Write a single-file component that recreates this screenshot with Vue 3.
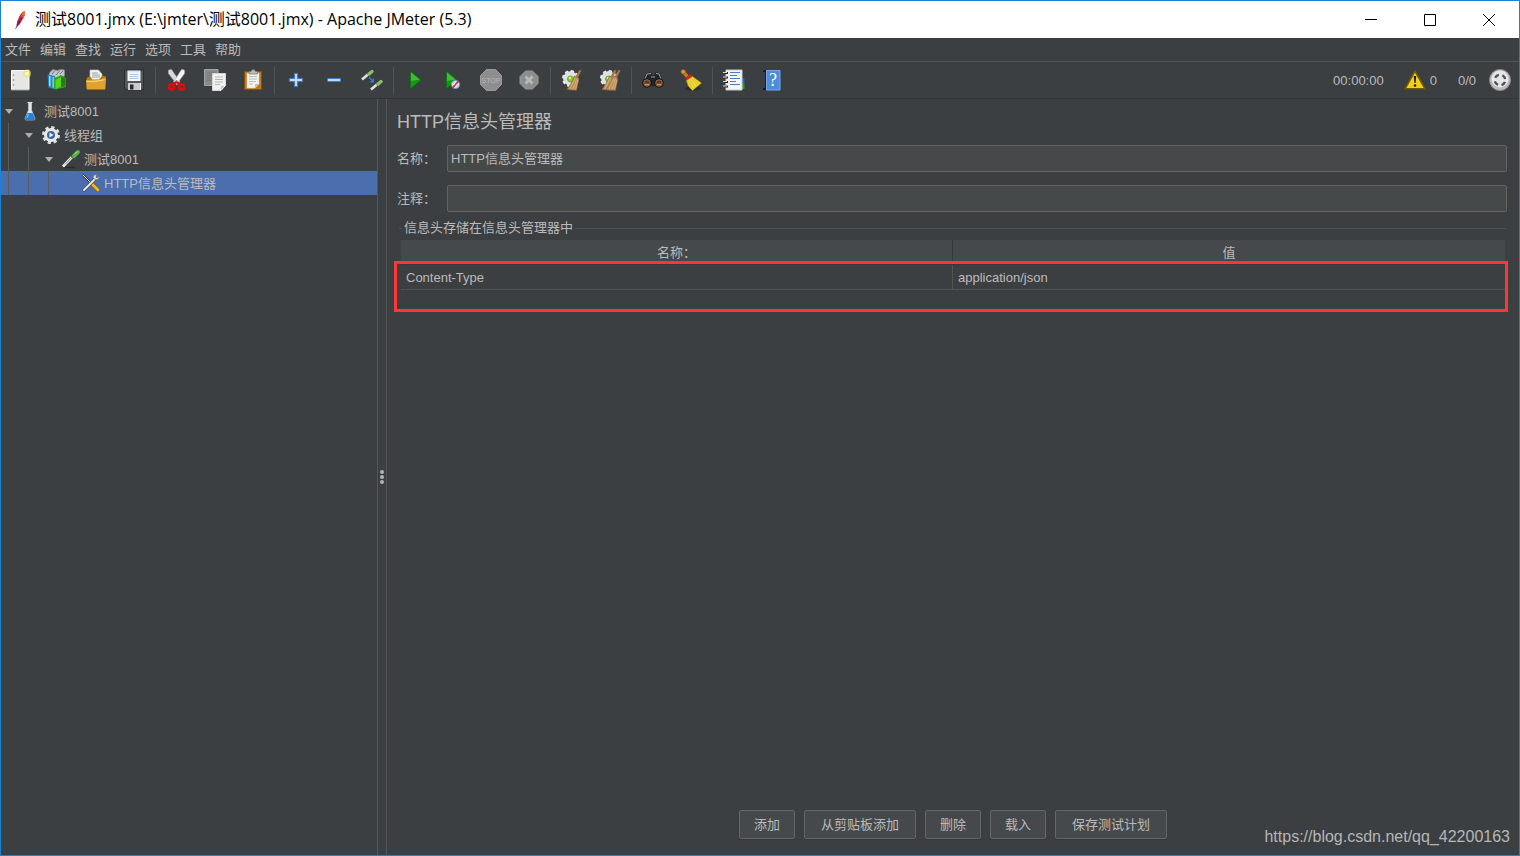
<script setup>
import { ref } from 'vue'

const menus = ['文件', '编辑', '查找', '运行', '选项', '工具', '帮助']

const broom = (x) => `<g transform="translate(${x} 0)"><path d="M18.500 1 20.500 1.500 17 8.500 14.500 7.500Z" fill="#a9754a"/><path d="M13.500 7 17.500 8.800 17.500 12 15.500 21.500 6 20.500 10 14.500Z" fill="#bb8f5b" stroke="#86623c" stroke-width=".6"/><path d="M14 9 9 20M15.500 10 12 20.500M16.800 11 14.500 20" stroke="#e0bd86" stroke-width=".7"/></g>`
const cog = '<circle cx="9.500" cy="9.500" r="7.200" fill="#d9dbdc" stroke="#ececec" stroke-width="2.600" stroke-dasharray="3.200 2.450"/><circle cx="9.500" cy="9.500" r="7" fill="#dfe1e2"/><circle cx="9.500" cy="10" r="3" fill="#7ed321" stroke="#6aa63a"/><circle cx="9" cy="9" r="1.200" fill="#d5ff9a"/>'

const tools = [
  [
    { name: '新建', art: '<path d="M2.500 1.500h17.500v19h-17.500z" fill="#e6e6e5" stroke="#fff"/><path d="M2 21h18.500" stroke="#999"/><circle cx="4.500" cy="6" r=".8" fill="#888"/><circle cx="4.500" cy="11" r=".8" fill="#888"/><circle cx="4.500" cy="16" r=".8" fill="#888"/><circle cx="18" cy="4.500" r="4" fill="#f0e45a" opacity=".6"/><circle cx="18" cy="4.500" r="1.800" fill="#fffbc0"/>' },
    { name: '模板', art: '<path d="M3 3 6 .5 10 1.500 14 .5 17.500 1v6L9 9 2 6Z" fill="#c2c6c8" stroke="#858b8f" stroke-width=".7"/><path d="M5 5 8 1.500M9 6l4-4.500M13 5l3-3" stroke="#737a7e"/><path d="M.5 5.500 8 7v13.500l-6.500-2Z" fill="#1d8ac9"/><path d="m2 7 1.500.3v10L2 17Z" fill="#9ddcff"/><path d="m5.500 8 1.500.3v10.500l-1.500-.4Z" fill="#7bcaf5"/><path d="m7 9.500 7-3.500 5 3v9L9 20.500 7 19Z" fill="#32a90d"/><path d="m8.500 11 5.500-3v9.500l-5.500 2.500Z" fill="#58d21f"/><path d="m14 8 4.500 1.500v7.500l-4.500 1Z" fill="#247e0b"/>' },
    { name: '打开', art: '<path d="M5 1h8.500L17 5v9H5Z" fill="#f4f4f4" stroke="#bbb" stroke-width=".7"/><path d="M7 4h6M7 6h8M7 8h8" stroke="#888" stroke-width=".8"/><path d="M1.500 9.500 3 8h3l1 2.500h7L17 7h3.500v13H1.500Z" fill="#b77a12"/><path d="M1 11h6.500l8-.5 5.500-2-1 12.500H2Z" fill="#dfa22e"/><path d="M2 12.500h6l8-1 3.500-1" fill="none" stroke="#ffdc89"/><path d="M2 20.500h18" stroke="#a26a0e"/>' },
    { name: '保存', art: '<path d="M1.500 1h19v20h-17l-2-2Z" fill="#55585a" stroke="#2b2d2f"/><path d="M4.500 1.500h13V12h-13Z" fill="#f5f7f9"/><path d="M5 2h12v1.500H5Z" fill="#dce5ee"/><path d="M6.500 5.500h9M6.500 7.500h9M6.500 9.500h9" stroke="#a9c6de"/><path d="M5 14h12v7H5Z" fill="#c9cbcc"/><path d="M7 15.500h3.500v5H7Z" fill="#2c2e30"/><path d="M17.500 14v7" stroke="#eee"/>' }
  ],
  [
    { name: '剪切', art: '<path d="M2.500 1 5.500.5 14 13 11 15.500 2.500 4.500Z" fill="#d9dadb" stroke="#aaa" stroke-width=".6"/><path d="M18.500 1 15.500.5 7.500 13 10.500 15.500 18.500 4.500Z" fill="#f4f4f4" stroke="#aaa" stroke-width=".6"/><circle cx="5.500" cy="18" r="2.600" fill="none" stroke="#d50f12" stroke-width="2.600"/><circle cx="15.500" cy="18" r="2.600" fill="none" stroke="#d50f12" stroke-width="2.600"/><path d="m6.500 15.500 4-2.500 4 2.500" fill="none" stroke="#d50f12" stroke-width="2.600"/><circle cx="10.500" cy="12" r="1" fill="#888"/>' },
    { name: '复制', art: '<path d="M.5.500H14v16H.5Z" fill="#888b8c" stroke="#a4a7a8"/><path d="M3 4h9M3 6.500h5M3 9h4M3 11.500h4" stroke="#757879"/><path d="M8.500 4.500h13v12L17 21.500H8.500Z" fill="#f1f1f0" stroke="#d5d5d5"/><path d="M11 8h8M11 10.500h8M11 13h8M11 15.500h5" stroke="#b5b5b5"/><path d="M16.500 21.500v-5h5Z" fill="#c8c8c8" stroke="#fff" stroke-width=".5"/>' },
    { name: '粘贴', art: '<path d="M2.500 2.500h17v18h-17Z" fill="#c27a19" stroke="#865006"/><path d="M5 4h12v11l-4 4H5Z" fill="#f3f3f2" stroke="#ccc" stroke-width=".6"/><path d="M7 7.500h8M7 10h8M7 12.500h7M7 15h4" stroke="#bbb"/><path d="M7 5V2.500h2L10 .8h2.500l1 1.700h2V5Z" fill="#b8bcba" stroke="#6f7472" stroke-width=".7"/><path d="M13 19v-4h4Z" fill="#bfbfbf"/>' }
  ],
  [
    { name: '展开', art: '<path d="M9.500 4.500h3v5h5v3h-5v5h-3v-5h-5v-3h5Z" fill="#bcd9f7" stroke="#3c7bd0"/>' },
    { name: '折叠', art: '<path d="M4.500 9.500h13v3h-13Z" fill="#bcd9f7" stroke="#3c7bd0"/>' },
    { name: '切换', art: '<path d="m1 10.500 6.500-5.500" stroke="#dfe2df" stroke-width="2.600"/><path d="m6 4 3 3.500" stroke="#4b6f3d" stroke-width="1.600"/><path d="m8 5 3-2.500" stroke="#8bbf6b" stroke-width="3.400" stroke-linecap="round"/><path d="m10 20.500 6.500-5.500" stroke="#dfe2df" stroke-width="2.600"/><path d="m15 14 3 3.500" stroke="#4b6f3d" stroke-width="1.600"/><path d="m17 15 3-2.500" stroke="#8bbf6b" stroke-width="3.400" stroke-linecap="round"/><path d="m8 8.500 3.500 3" stroke="#3477df" stroke-width="1.400"/><path d="M13 9v4.500H8.500Z" fill="#3477df"/>' }
  ],
  [
    { name: '启动', art: '<path d="M6.500 2.500 17 11 6.500 19.500Z" fill="#129b0e" stroke="#087708" stroke-width=".7"/><path d="M7 3.500 15.500 10.500 7 12Z" fill="#45b93b"/>' },
    { name: '不停顿开始', art: '<path d="M4.500 2.500 15 11 4.500 19.500Z" fill="#129b0e" stroke="#087708" stroke-width=".7"/><path d="M5 3.500 13.500 10.500 5 12Z" fill="#45b93b"/><circle cx="13.500" cy="15.500" r="4" fill="#fff" stroke="#5d9de0"/><circle cx="13.500" cy="15.500" r="2.500" fill="none" stroke="#8cb6e2" stroke-width=".8"/><path d="m10.500 19 6-7" stroke="#e32d25" stroke-width="1.700"/>' },
    { name: '停止', art: '<path d="M6.500.500h9l6 6v9l-6 6h-9l-6-6v-9Z" fill="#8e8e8e" stroke="#9c9c9c"/><text x="11" y="14" text-anchor="middle" font-family="Liberation Sans, sans-serif" font-size="7" fill="#b8b8b8">STOP</text>' },
    { name: '关闭', art: '<path d="M7.500 2h7l5.500 5.500v7L14.500 20h-7L2 14.500v-7Z" fill="#8d8d8d" stroke="#999"/><path d="m7.500 7.500 7 7m0-7-7 7" stroke="#b9b9b9" stroke-width="2.800"/>' }
  ],
  [
    { name: '清除', art: cog + broom(0) },
    { name: '清除全部', art: cog + broom(-3) + broom(1) }
  ],
  [
    { name: '查找', art: '<path d="M4 5 6 3.500h3l1.500 3h1.500l1.500-3H16L18 5l3 7-1 5H2L.5 12Z" fill="#222425"/><path d="m3 10 2-5 4-.5M19 10l-2-5-3-.5M9 8h4" fill="none" stroke="#9d9fa0"/><circle cx="5" cy="14" r="4" fill="#6c3413" stroke="#151515" stroke-width="1.500"/><circle cx="17" cy="14" r="4" fill="#6c3413" stroke="#151515" stroke-width="1.500"/><circle cx="5" cy="14" r="3.300" fill="none" stroke="#aaa" stroke-width=".6"/><circle cx="17" cy="14" r="3.300" fill="none" stroke="#aaa" stroke-width=".6"/><path d="M3 15.500h4M15 15.500h4" stroke="#d8884e" stroke-width="1.500"/>' },
    { name: '重置查找', art: '<ellipse cx="13" cy="19.500" rx="8" ry="2" fill="#2c2e2f"/><path d="m3.500 3 4 5" stroke="#c8801f" stroke-width="3.600"/><circle cx="3.200" cy="2.800" r="2.300" fill="#dd9a3c" stroke="#87500a" stroke-width=".7"/><path d="m5 9 5.500-4 2.500 2.500-6 4.500Z" fill="#d51d20"/><path d="M6.500 11.500 12.500 7.500 21.500 14 12.500 21.500Q7 17 6.500 11.500Z" fill="#f1db35" stroke="#a48a08" stroke-width=".7"/><path d="m8 12 5 8M10 11l5 7.500M12 9.500l5.500 7M14 10l5 5" stroke="#c9b02a" stroke-width=".6"/>' }
  ],
  [
    { name: '函数助手', art: '<path d="M17 9h4.500v6H17Z" fill="#315ed1"/><path d="M17 15h4.500v5H17Z" fill="#19a81c"/><path d="M3 1h16v20H3Z" fill="#f5f5f5" stroke="#ccc"/><path d="M2 4h3M2 8.500h3M2 13h3M2 17.500h3" stroke="#202020" stroke-width="2"/><path d="M0 3.500h4M0 8h4M0 12.500h4M0 17h4" stroke="#ddd" stroke-width="1.200"/><path d="M7 3.500h10M7 6.500h7M7 9.500h10M7 12.500h6M7 15.500h10" stroke="#407ebc"/>' },
    { name: '帮助', art: '<path d="M2 2 4 1h13.500v20H2Z" fill="#17191b"/><path d="M5.500 1.500H19V21H5.500Z" fill="#4c8cd8" stroke="#72aced"/><path d="M3 3v16" stroke="#656a70"/><text x="12" y="17" text-anchor="middle" font-family="Liberation Serif, serif" font-size="18" fill="#fff">?</text>' }
  ]
]

const tree = [
  { label: '测试8001', depth: 0, art: '<path d="M6.500 1.500h5" stroke="#e8eef5"/><path d="M7.500 2v7L4 17.500q0 1.500 1 1.500h8q1 0 1-1.500L10.500 9V2Z" fill="#dfe6ee" stroke="#c8d0d8" stroke-width=".6"/><path d="m6.500 12-2.500 5.500q0 1.500 1 1.500h8q1 0 1-1.500L11.500 12Z" fill="#2480e2"/><path d="m7.500 13-1.500 4" stroke="#8fc9ff"/>' },
  { label: '线程组', depth: 1, art: '<circle cx="10" cy="10" r="7.500" fill="none" stroke="#dcdfe1" stroke-width="3" stroke-dasharray="3.200 2.690"/><circle cx="10" cy="10" r="5.500" fill="#3f6796" stroke="#e6e9eb" stroke-width="3"/><path d="m8.500 7.500 4 2.500-4 2.500Z" fill="#eaf3ff"/>' },
  { label: '测试8001', depth: 2, art: '<path d="M2 18.500h12" stroke="#292b2c" stroke-width="1.500"/><path d="m2 17.500 9.500-10" stroke="#edf0ef" stroke-width="2.600"/><path d="m4 15.500 7.500-8" stroke="#5e6462" stroke-width=".8"/><path d="m10 6 4 4" stroke="#315f29" stroke-width="2"/><path d="m13 7 4-4" stroke="#5baf48" stroke-width="4" stroke-linecap="round"/><path d="m13.500 5 3-2.500" stroke="#b2e5a1"/>' },
  { label: 'HTTP信息头管理器', depth: 3, selected: true, art: '<path d="m2 2 8 8" stroke="#303438" stroke-width="2.200"/><path d="m2 2 8 8" stroke="#dfe1e3"/><path d="m11 11 6 6" stroke="#8d6309" stroke-width="4" stroke-linecap="round"/><path d="m11 11 6 6" stroke="#f4ba25" stroke-width="2.500" stroke-linecap="round"/><path d="m3 17 11-11" stroke="#4c5054" stroke-width="3.500" stroke-linecap="round"/><path d="m3 17 11-11" stroke="#e5e7e8" stroke-width="2" stroke-linecap="round"/><path d="M16 1.500q-4-.5-4 3l2.500 2.500q4 0 4-4L16 5l-1-1Z" fill="#d8dadc" stroke="#555" stroke-width=".6"/>' }
]

const name = ref('HTTP信息头管理器')
const comment = ref('')
const headers = ref([{ name: 'Content-Type', value: 'application/json' }])
const actions = ['添加', '从剪贴板添加', '删除', '载入', '保存测试计划']
</script>

<template>
  <div class="window">
    <header class="titlebar">
      <svg class="feather" viewBox="0 0 14 20" width="14" height="20">
        <path d="M11.500 1Q13 3 10.500 8L6.500 14.500 3.500 17Q3.500 12 6 7T11.500 1Z" fill="#c92045" />
        <path d="M11.500 1Q13 3 10.500 8L8 7Q9 3 11.500 1Z" fill="#ef7b25" />
        <path d="M3.500 17Q3.500 13 5 10L7.500 12.500Z" fill="#8b2068" />
        <path d="M10 5 2.500 19" stroke="#592144" stroke-width=".7" fill="none" />
      </svg>
      <h1>测试8001.jmx (E:\jmter\测试8001.jmx) - Apache JMeter (5.3)</h1>
      <div class="controls">
        <button aria-label="最小化"><svg viewBox="0 0 12 12" width="12" height="12"><path d="M0 5.500h12" /></svg></button>
        <button aria-label="最大化"><svg viewBox="0 0 12 12" width="12" height="12"><path d="M.5.500h11v11H.5Z" /></svg></button>
        <button aria-label="关闭"><svg viewBox="0 0 12 12" width="12" height="12"><path d="m0 0 12 12M12 0 0 12" /></svg></button>
      </div>
    </header>

    <nav class="menubar">
      <button v-for="m in menus" :key="m">{{ m }}</button>
    </nav>

    <div class="toolbar">
      <div v-for="(group, i) in tools" :key="i" class="group">
        <button v-for="t in group" :key="t.name" :aria-label="t.name">
          <svg viewBox="0 0 22 22" width="22" height="22" fill="none" v-html="t.art"></svg>
        </button>
      </div>
      <div class="status">
        <span class="time">00:00:00</span>
        <button class="warn" aria-label="日志错误">
          <svg viewBox="0 0 22 20" width="22" height="20">
            <path d="M11 1.200 21 18.800H1Z" fill="#f7cf12" stroke="#6f5903" stroke-width="1.600" stroke-linejoin="round" />
            <path d="M9.800 6h2.400l-.6 7h-1.200Z" fill="#1d1b12" />
            <circle cx="11" cy="15.500" r="1.300" fill="#1d1b12" />
          </svg>
          <span>0</span>
        </button>
        <span class="threads">0/0</span>
        <svg viewBox="0 0 22 22" width="22" height="22">
          <circle cx="11" cy="11" r="10.500" fill="#bdbdbd" stroke="#8e8e8e" />
          <circle cx="11" cy="10" r="8.500" fill="#e6e6e6" />
          <circle cx="11" cy="11" r="5.300" fill="none" stroke="#4d5052" stroke-width="2.400" stroke-dasharray="4.600 3.725" stroke-dashoffset="-1.860" />
        </svg>
      </div>
    </div>

    <div class="body">
      <ul class="tree" role="tree" aria-label="测试计划">
        <li v-for="(n, i) in tree" :key="i" role="treeitem" :class="{ selected: n.selected }" :aria-selected="!!n.selected">
          <span v-for="d in n.depth" :key="d" class="guide"></span>
          <span class="arrow"><svg v-if="!n.selected" viewBox="0 0 8 5" width="8" height="5"><path d="M0 0h8L4 5Z" fill="#adadad" /></svg></span>
          <svg viewBox="0 0 20 20" width="20" height="20" fill="none" v-html="n.art"></svg>
          <span class="label">{{ n.label }}</span>
        </li>
      </ul>

      <div class="divider" role="separator"><i></i><i></i><i></i></div>

      <main class="panel">
        <h2>HTTP信息头管理器</h2>
        <div class="field">
          <label for="name">名称：</label>
          <input id="name" v-model="name" type="text" />
        </div>
        <div class="field">
          <label for="comment">注释：</label>
          <input id="comment" v-model="comment" type="text" />
        </div>
        <fieldset>
          <legend>信息头存储在信息头管理器中</legend>
          <div class="grid">
            <table>
              <thead>
                <tr><th>名称：</th><th>值</th></tr>
              </thead>
              <tbody>
                <tr v-for="h in headers" :key="h.name"><td>{{ h.name }}</td><td>{{ h.value }}</td></tr>
              </tbody>
            </table>
            <div class="highlight"></div>
          </div>
        </fieldset>
        <div class="actions">
          <button v-for="a in actions" :key="a" :class="{ wide: a.length > 2 }">{{ a }}</button>
        </div>
      </main>
    </div>
    <div class="watermark">https://blog.csdn.net/qq_42200163</div>
  </div>
</template>

<style>
body {
  background: #3c3f41;
}
</style>

<style scoped>
.window {
  position: relative;
  box-sizing: border-box;
  min-height: 100vh;
  display: flex;
  flex-direction: column;
  border: 1px solid #1883d7;
  background: #3c3f41;
  color: #bbbbbb;
  font: 13px/18px "Liberation Sans", "Noto Sans CJK SC", sans-serif;
}
button {
  margin: 0;
  padding: 0;
  border: 0;
  background: none;
  color: inherit;
  font: inherit;
}
.titlebar {
  display: flex;
  align-items: center;
  height: 37px;
  padding-left: 12px;
  background: #ffffff;
  color: #000000;
}
.titlebar h1 {
  flex: 1;
  margin: 0 0 2px 8px;
  font: 16px/20px "Open Sans", "Noto Sans CJK SC", sans-serif;
}
.controls {
  display: flex;
  align-self: stretch;
  margin-right: 1px;
}
.controls button {
  display: flex;
  align-items: center;
  justify-content: center;
  width: 59px;
}
.controls path {
  fill: none;
  stroke: #000000;
}
.menubar {
  display: flex;
  gap: 9px;
  height: 23px;
  padding-left: 4px;
  border-bottom: 1px solid #515456;
}
.toolbar {
  display: flex;
  height: 36px;
  border-bottom: 1px solid #323436;
}
.group {
  display: flex;
}
.group + .group::before {
  content: "";
  width: 1px;
  margin: 5px 2px 4px;
  background: #515456;
}
.group button {
  display: flex;
  align-items: center;
  justify-content: center;
  width: 38px;
}
.status {
  display: flex;
  align-items: center;
  margin-left: auto;
  padding-right: 8px;
}
.status span {
  padding-top: 2px;
}
.status .time {
  margin-right: 20px;
}
.warn {
  display: flex;
  align-items: center;
  gap: 4px;
  margin-right: 21px;
}
.threads {
  margin-right: 13px;
}
.body {
  flex: 1;
  display: flex;
}
.tree {
  box-sizing: border-box;
  flex: none;
  width: 376px;
  margin: 0;
  padding: 0;
  list-style: none;
}
.tree li {
  display: flex;
  align-items: center;
  height: 24px;
}
.tree li.selected {
  background: #4b6eaf;
}
.guide {
  align-self: stretch;
  width: 20px;
  background: linear-gradient(#595b5d, #595b5d) 7px 0 / 1px 100% no-repeat;
}
.arrow {
  display: flex;
  width: 16px;
  padding-left: 4px;
}
.label {
  margin-left: 3px;
  padding-top: 1px;
}
.divider {
  display: flex;
  flex-direction: column;
  align-items: center;
  justify-content: center;
  gap: 1px;
  width: 8px;
  border: solid #555555;
  border-width: 0 1px;
}
.divider i {
  width: 4px;
  height: 4px;
  border-radius: 2px;
  background: #b4b4b4;
}
.panel {
  flex: 1;
  min-width: 0;
  display: flex;
  flex-direction: column;
  padding: 11px 12px 16px 10px;
}
h2 {
  margin: 0 0 11px;
  font-size: 18px;
  font-weight: normal;
  line-height: 24px;
}
.field {
  display: flex;
  align-items: center;
  margin-bottom: 13px;
}
.field label {
  width: 50px;
}
.field input {
  box-sizing: border-box;
  flex: 1;
  min-width: 0;
  height: 27px;
  padding: 0 3px 2px;
  border: 1px solid #646464;
  border-radius: 2px;
  outline: 0;
  background: #45494a;
  color: #bbbbbb;
  font: inherit;
}
fieldset {
  min-width: 0;
  margin: -6px 0 0 2px;
  padding: 3px 2px 0;
  border: solid #515456;
  border-width: 1px 0 0;
}
legend {
  margin-left: 1px;
  padding: 0 2px;
}
.grid {
  position: relative;
}
table {
  width: 100%;
  table-layout: fixed;
  border-collapse: separate;
  border-spacing: 0;
}
th {
  height: 22px;
  padding: 2px 0 0;
  border-bottom: 1px solid #35383a;
  background: #45494b;
  font-weight: normal;
}
td {
  height: 22px;
  padding: 2px 5px 0;
  border-bottom: 1px solid #515456;
}
th:first-child {
  border-right: 1px solid #35383a;
}
td:first-child {
  border-right: 1px solid #515456;
}
.highlight {
  position: absolute;
  inset: 21px -3px -22px -7px;
  border: 3px solid #ff3636;
}
.actions {
  display: flex;
  justify-content: center;
  gap: 9px;
  margin-top: auto;
  padding-left: 2px;
}
.actions button {
  height: 29px;
  padding: 0 14px;
  border: 1px solid #646769;
  border-radius: 2px;
  background: #45494b;
  box-shadow: 0 1px 1px #343638;
}
.actions .wide {
  padding: 0 16px;
}
.watermark {
  position: absolute;
  right: 9px;
  bottom: 8px;
  color: #b5b6b7;
  font-size: 16px;
  line-height: 20px;
}
</style>
